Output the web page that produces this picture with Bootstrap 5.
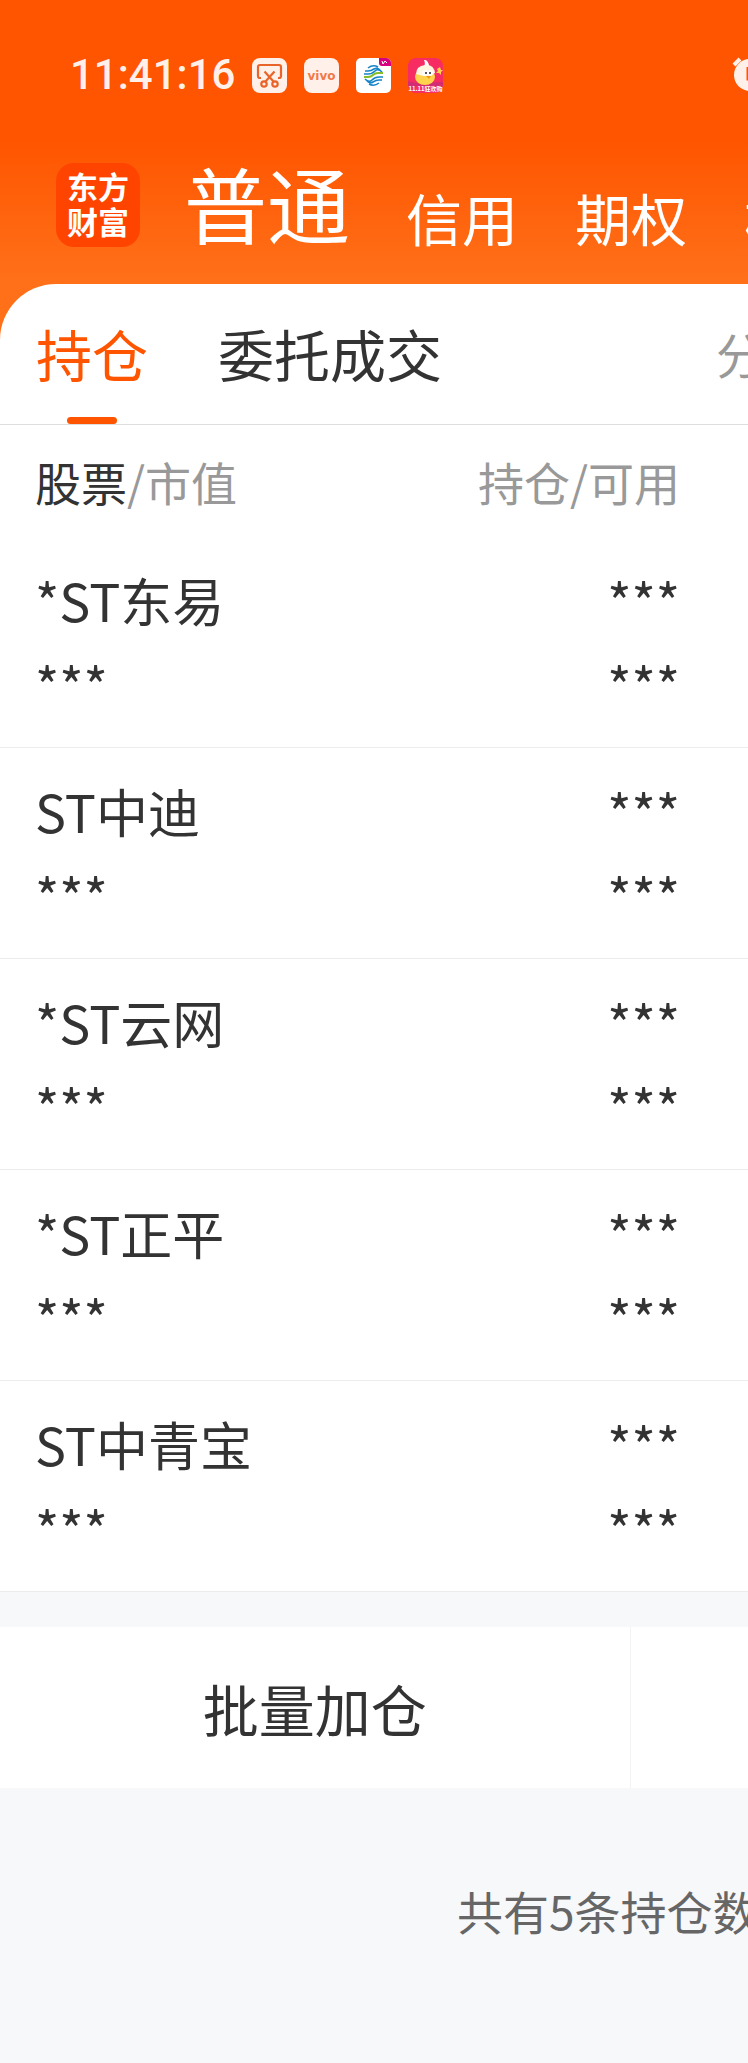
<!DOCTYPE html>
<html lang="zh-CN">
<head>
<meta charset="utf-8">
<meta name="viewport" content="width=device-width, initial-scale=1">
<title>持仓</title>
<link href="https://cdn.jsdelivr.net/npm/bootstrap@5.3.0/dist/css/bootstrap.min.css" rel="stylesheet">
<style>
  body { font-family: "Noto Sans CJK SC", sans-serif; color: #333; background: #f7f8fa; }
  a, button { color: inherit; text-decoration: none; white-space: nowrap; }
  .top-area { background: linear-gradient(#ff5500 140px, #ff7019 280px); color: #fff; }
  .status-bar { height: 150px; padding-left: 70px; color: #fff1ea; }
  .clock { font: 500 42px/60px Roboto, sans-serif; width: 182px; }
  .status-icons { gap: 17px; }
  .status-icons svg { width: 35px; height: 35px; flex: none; }
  .alarm { width: 40px; height: 36px; flex: none; margin-right: -24px; }
  .accounts { height: 134px; padding: 0 0 33px 56px; }
  .brand-logo { width: 84px; height: 84px; border-radius: 18px; background: #ff4400; font: 700 31px/35px "Noto Sans CJK SC", sans-serif; margin: 0 44px 4px 0; padding-bottom: 4px; }
  .account-link { font-size: 56px; line-height: 68px; margin-right: 57px; flex: none; }
  .account-link.current { font-size: 83px; line-height: 98px; margin-right: 56px; }
  .panel-wrap { background: #ff7019; }
  .panel { background: #fff; border-top-left-radius: 56px; }
  .view-tabs { height: 141px; padding-left: 36px; border-bottom: 1px solid #dedede; }
  .view-tab { font-size: 56px; line-height: 64px; padding-top: 37px; margin-right: 70px; position: relative; color: #333; }
  .view-tab.current { color: #ff5500; }
  .view-tab.current::after { content: ""; position: absolute; bottom: 0; left: 50%; margin-left: -25px; width: 50px; height: 7px; border-radius: 4px; background: #ff5500; }
  .view-tab.share-tab { font-size: 48px; color: #999; margin: 0 -64px 0 auto; }
  .holdings { width: 100%; border-collapse: separate; border-spacing: 0; }
  .holdings th { font-size: 46px; line-height: 60px; font-weight: 400; padding: 26px 0; }
  .holdings td { font-size: 52px; line-height: 84px; padding: 21px 0; vertical-align: top; border-bottom: 1px solid #ececec; }
  .holdings th:first-child, .holdings td:first-child { padding-left: 35px; }
  .holdings th:last-child, .holdings td:last-child { padding-right: 68px; text-align: right; }
  .muted { color: #999; }
  .actions { margin-top: 35px; height: 161px; background: #fff; }
  .action { font-size: 56px; flex: none; border: 0; background: none; color: #333; }
  .add-all { width: 84.3%; border-right: 1px solid #f3f3f3; }
  .summary { padding: 90px 0 100px 457px; font-size: 46px; line-height: 64px; color: #666; white-space: nowrap; }
</style>
</head>
<body>
<div class="top-area overflow-hidden">
  <div class="status-bar d-flex align-items-center">
    <span class="clock">11:41:16</span>
    <div class="status-icons d-flex me-auto">
      <svg viewBox="0 0 35 35"><rect width="35" height="35" rx="8" fill="#fff1ea"/><g fill="none" stroke="#e8642a" stroke-width="2.200"><path d="M9 20H8a2 2 0 0 1-2-2V9a2 2 0 0 1 2-2h19a2 2 0 0 1 2 2v9a2 2 0 0 1-2 2h-1M12.500 13.500l9 10M22.500 13.500l-9 10"/><circle cx="12" cy="26" r="2.700"/><circle cx="23" cy="26" r="2.700"/></g></svg>
      <svg viewBox="0 0 35 35"><rect width="35" height="35" rx="8" fill="#fff1ea"/><text x="17.500" y="21.500" text-anchor="middle" font-family="DejaVu Sans" font-weight="700" font-size="12" fill="#f07a48">vivo</text></svg>
      <svg viewBox="0 0 35 35"><rect width="35" height="35" rx="5" fill="#fff"/><path d="M23 0h7a5 5 0 0 1 5 5v3h-9a3 3 0 0 1-3-3z" fill="#d6007f"/><path d="M26 3l1 3 2-3 2 2" fill="none" stroke="#fff"/><g fill="none" stroke="#1684c7" stroke-width="1.600"><path d="M12 10q5-4 10-1M9 13h3q3 0 6-2t6 1M8 16h4q4 0 7-3t7 1M23 25q-5 4-10 1M26 22h-3q-3 0-6 2t-6-1M27 19h-4q-4 0-7 3t-7-1"/></g><path d="M8 19h4q3 0 5-2t5-2h5" fill="none" stroke="#86bd2c" stroke-width="2"/></svg>
      <svg viewBox="0 0 35 35"><rect width="35" height="35" rx="8" fill="#f72c62"/><path d="M0 23q10 3 18 2t17-1v4H0z" fill="#d32c72"/><path d="M16 2c4-1 6 6 5 9h-6c1-3 3-5 1-9z" fill="#fff"/><ellipse cx="17" cy="19" rx="10" ry="8" fill="#ffd34c"/><path d="M8 16q0-8 9-9t10 8q-4 3-9 3T8 16z" fill="#fff7df"/><circle cx="17" cy="15" r="3" fill="#fff"/><circle cx="22" cy="15" r="3" fill="#fff"/><circle cx="18" cy="15" r="1" fill="#222"/><circle cx="22" cy="15" r="1" fill="#222"/><path d="M18 18l5 0-2 3z" fill="#f29a16"/><path d="M32 9l1 3 2 0-2 2 0 3-2-2-3 0 2-2-1-2z" fill="#ffd34c"/><text x="17.500" y="33" text-anchor="middle" font-family="Noto Sans CJK SC" font-weight="700" font-size="6" fill="#fff">11.11狂欢购</text></svg>
    </div>
    <svg class="alarm" viewBox="0 0 40 36"><circle cx="18" cy="18" r="16" fill="#fff1ea"/><path d="M2 8l6-6M29 2l6 6" stroke="#fff1ea" stroke-width="4"/><path d="M16 10v12h9" fill="none" stroke="#ff5500" stroke-width="3"/></svg>
  </div>
  <nav class="accounts d-flex align-items-end">
    <a href="#" class="brand-logo d-flex flex-column align-items-center justify-content-center flex-shrink-0"><span>东方</span><span>财富</span></a>
    <a href="#" class="account-link current">普通</a>
    <a href="#" class="account-link">信用</a>
    <a href="#" class="account-link">期权</a>
    <a href="#" class="account-link">模拟</a>
  </nav>
</div>
<div class="panel-wrap">
<main class="panel overflow-hidden">
  <nav class="view-tabs d-flex">
    <a href="#" class="view-tab current">持仓</a>
    <a href="#" class="view-tab">委托成交</a>
    <a href="#" class="view-tab share-tab">分享</a>
  </nav>
  <table class="holdings">
    <thead><tr><th scope="col">股票<span class="muted">/市值</span></th><th scope="col" class="muted">持仓/可用</th></tr></thead>
    <tbody>
      <tr><td>*ST东易<br>***</td><td>***<br>***</td></tr>
      <tr><td>ST中迪<br>***</td><td>***<br>***</td></tr>
      <tr><td>*ST云网<br>***</td><td>***<br>***</td></tr>
      <tr><td>*ST正平<br>***</td><td>***<br>***</td></tr>
      <tr><td>ST中青宝<br>***</td><td>***<br>***</td></tr>
    </tbody>
  </table>
</main>
</div>
<div class="actions d-flex">
  <button type="button" class="action add-all">批量加仓</button>
</div>
<p class="summary mb-0 overflow-hidden">共有5条持仓数据</p>
<script src="https://cdn.jsdelivr.net/npm/bootstrap@5.3.0/dist/js/bootstrap.bundle.min.js"></script>
</body>
</html>
